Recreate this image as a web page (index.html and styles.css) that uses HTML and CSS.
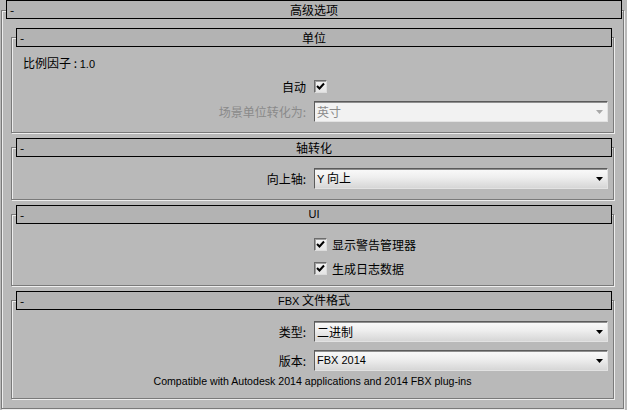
FILE: index.html
```html
<!DOCTYPE html>
<html lang="zh-CN">
<head>
<meta charset="utf-8">
<title>高级选项</title>
<link rel="stylesheet" href="styles.css">
</head>
<body>
<div class="panel frame">
  <div class="rl-head outer-head"><span class="dash">-</span><span class="title">高级选项</span><span></span></div>

  <section class="group frame g-units">
    <div class="rl-head"><span class="dash">-</span><span class="title">单位</span><span></span></div>
    <div class="scale-row">比例因子 : <span class="latin">1.0</span></div>
    <div class="form-row row-check">
      <span class="lbl">自动</span>
      <span class="ctrl"><span class="check"><svg viewBox="0 0 13 13" width="13" height="13"><polyline points="3,6 5.5,8.5 10,3.5" fill="none" stroke="#000" stroke-width="2"/></svg></span></span>
    </div>
    <div class="form-row row-select">
      <span class="lbl disabled">场景单位转化为:</span>
      <span class="select is-disabled"><span class="val">英寸</span><svg class="arrow" viewBox="0 0 7 4" width="7" height="4"><polygon points="0,0 7,0 3.5,4"/></svg></span>
    </div>
  </section>

  <section class="group frame g-axis">
    <div class="rl-head"><span class="dash">-</span><span class="title">轴转化</span><span></span></div>
    <div class="form-row row-select first">
      <span class="lbl">向上轴:</span>
      <span class="select"><span class="val"><span class="latin">Y</span> 向上</span><svg class="arrow" viewBox="0 0 7 4" width="7" height="4"><polygon points="0,0 7,0 3.5,4"/></svg></span>
    </div>
  </section>

  <section class="group frame g-ui">
    <div class="rl-head"><span class="dash">-</span><span class="title latin">UI</span><span></span></div>
    <div class="form-row row-check first">
      <span class="lbl"></span>
      <span class="ctrl"><span class="check"><svg viewBox="0 0 13 13" width="13" height="13"><polyline points="3,6 5.5,8.5 10,3.5" fill="none" stroke="#000" stroke-width="2"/></svg></span><span class="ck-text">显示警告管理器</span></span>
    </div>
    <div class="form-row row-check second">
      <span class="lbl"></span>
      <span class="ctrl"><span class="check"><svg viewBox="0 0 13 13" width="13" height="13"><polyline points="3,6 5.5,8.5 10,3.5" fill="none" stroke="#000" stroke-width="2"/></svg></span><span class="ck-text">生成日志数据</span></span>
    </div>
  </section>

  <section class="group frame g-fbx">
    <div class="rl-head"><span class="dash">-</span><span class="title"><span class="latin">FBX</span> 文件格式</span><span></span></div>
    <div class="form-row row-select first">
      <span class="lbl">类型:</span>
      <span class="select"><span class="val">二进制</span><svg class="arrow" viewBox="0 0 7 4" width="7" height="4"><polygon points="0,0 7,0 3.5,4"/></svg></span>
    </div>
    <div class="form-row row-select second">
      <span class="lbl">版本:</span>
      <span class="select"><span class="val latin">FBX 2014</span><svg class="arrow" viewBox="0 0 7 4" width="7" height="4"><polygon points="0,0 7,0 3.5,4"/></svg></span>
    </div>
    <div class="note latin">Compatible with Autodesk 2014 applications and 2014 FBX plug-ins</div>
  </section>
</div>
</body>
</html>
```

FILE: styles.css
```css
* { box-sizing: border-box; }
html, body { margin: 0; padding: 0; }
body {
  background: #b9b9b9;
  width: 627px;
  height: 410px;
  overflow: hidden;
  font-family: "Noto Sans CJK SC", "Liberation Sans", sans-serif;
  font-size: 12px;
  color: #000;
}
.latin { font-family: "Liberation Sans", "Noto Sans CJK SC", sans-serif; font-size: 11px; }

.frame {
  border: 1px solid #7a7a7a;
  box-shadow: 1px 1px 0 #eeeeee, inset 1px 1px 0 #eeeeee;
}

.panel {
  margin: 10px 3px 0 1px;
  padding-bottom: 9px;
}

.rl-head {
  display: grid;
  grid-template-columns: 1fr auto 1fr;
  grid-template-rows: 17px;
  align-items: center;
  height: 19px;
  margin: -10px 1px 0 4px;
  background: #b3b3b3;
  border: 1px solid #000;
  line-height: 17px;
  position: relative;
}
.outer-head { margin-top: -11px; }
.dash { padding-left: 3px; line-height: 15px; }
.title { white-space: nowrap; }

.group { margin: 14px 9px 0 9px; padding-bottom: 10px; }
.g-units { margin-top: 18px; }

.scale-row {
  margin-top: 8px;
  height: 16px;
  line-height: 16px;
  padding-left: 11px;
}

.form-row {
  display: grid;
  grid-template-columns: 1fr 294px;
  column-gap: 8px;
  padding-right: 5px;
  align-items: center;
}
.lbl { text-align: right; white-space: nowrap; }
.lbl.disabled { color: #8a8a8a; }

.row-check { height: 13px; margin-top: 9px; grid-template-rows: 13px; line-height: 13px; }
.g-ui .row-check.first { margin-top: 14px; }
.g-ui .row-check.second { margin-top: 11px; }
.row-select { height: 21px; margin-top: 8px; grid-template-rows: 21px; }
.row-select.first { margin-top: 11px; }

.ctrl { display: flex; align-items: center; gap: 5px; height: 13px; }
.check {
  width: 13px; height: 13px; flex: none;
  border: 1px solid;
  border-color: #6c6c6c #dcdcdc #dcdcdc #6c6c6c;
  background: linear-gradient(#f4f4f4, #e4e4e4);
  box-shadow: inset 1px 1px 0 #a0a0a0;
  display: block;
}
.check svg { display: block; margin: -1px; }
.ck-text { white-space: nowrap; line-height: 13px; }

.select {
  display: flex;
  align-items: center;
  justify-content: space-between;
  height: 21px;
  border: 1px solid;
  border-color: #5b5b5b #e2e2e2 #e2e2e2 #5b5b5b;
  box-shadow: inset 0 1px 0 #8f8f8f;
  background: linear-gradient(#fafafa, #eeeeee 45%, #d6d6d6);
  padding: 0 4px 0 2px;
}
.select .val { line-height: 19px; white-space: nowrap; }
.select .arrow { fill: #000; display: block; }
.select.is-disabled { background: #f2f2f2; color: #8a8a8a; }
.select.is-disabled .arrow { fill: #a8a8a8; }

.note {
  margin-top: 3px;
  height: 14px;
  line-height: 14px;
  text-align: center;
  white-space: nowrap;
  font-size: 10.6px;
}
```
